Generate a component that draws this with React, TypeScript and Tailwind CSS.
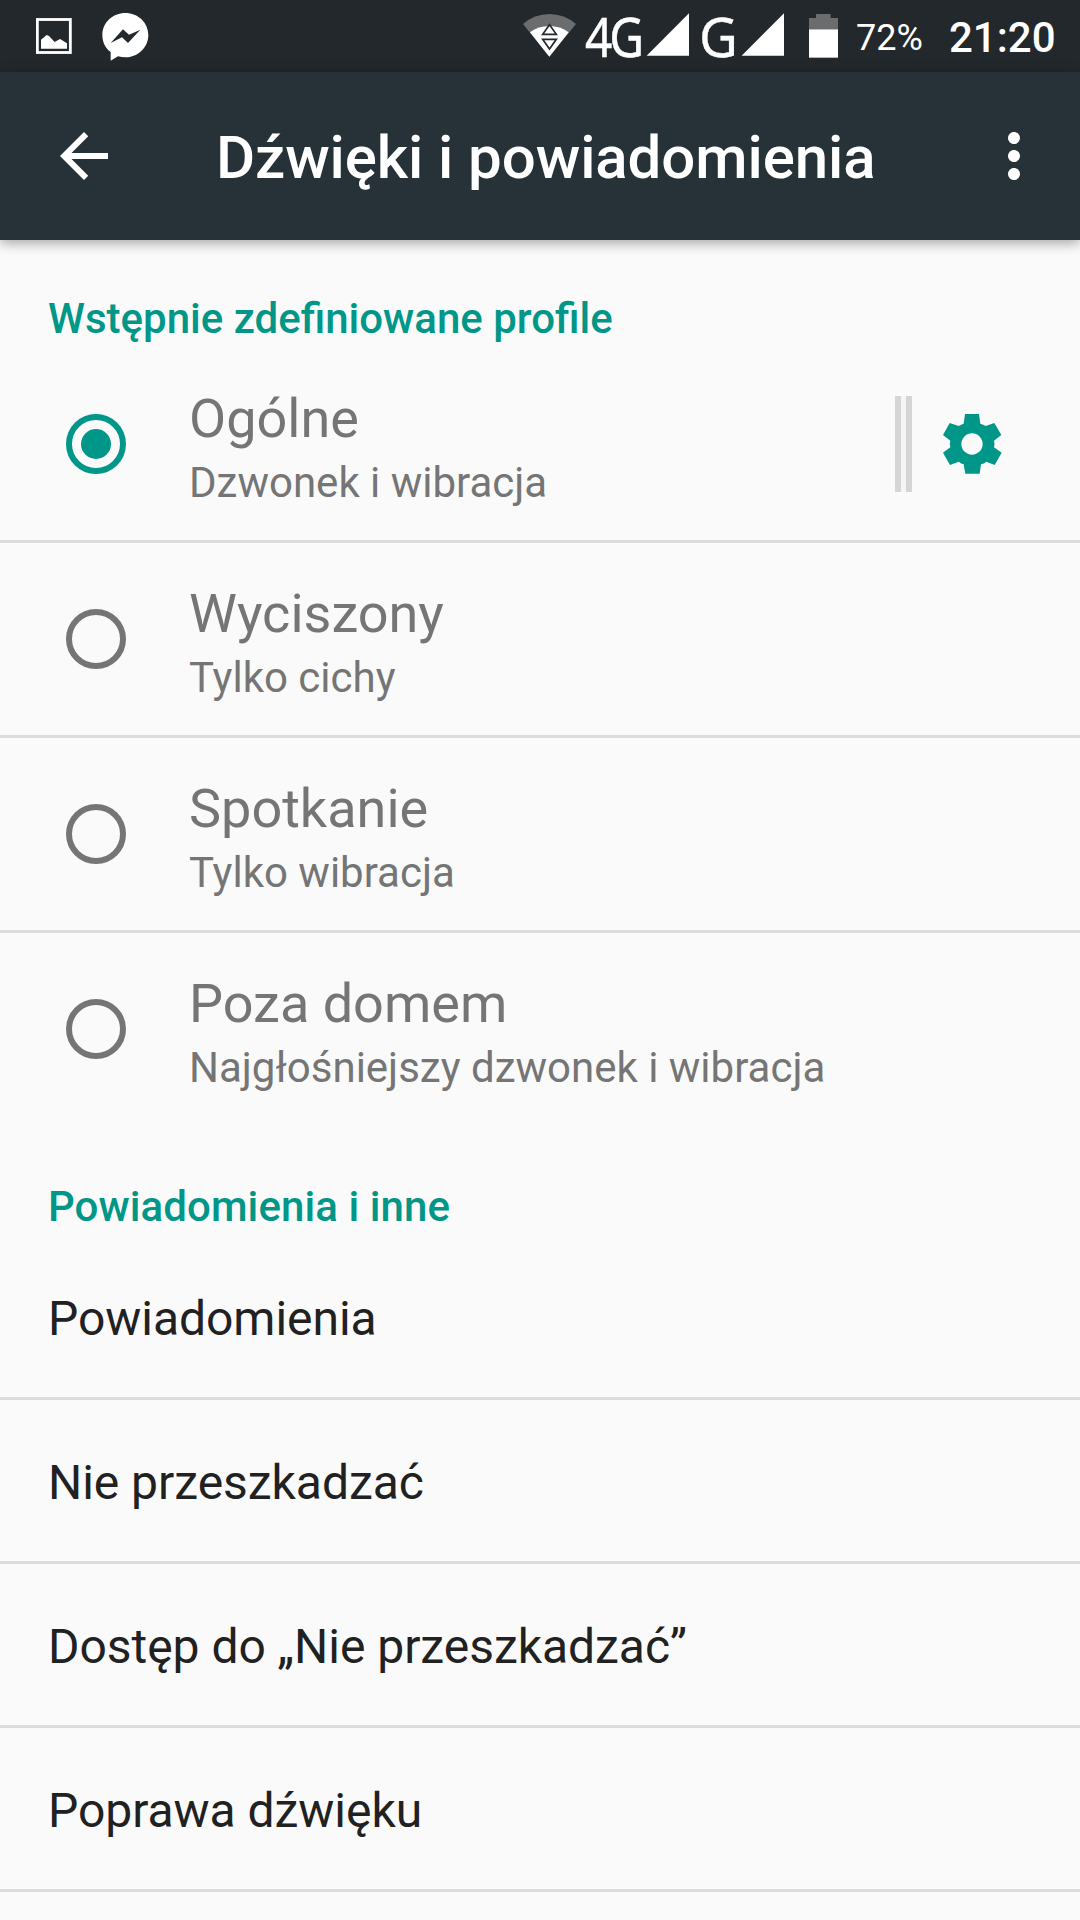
import { MdArrowBack, MdMoreVert } from "react-icons/md";

const profiles = [
  { name: "Ogólne", summary: "Dzwonek i wibracja", selected: true },
  { name: "Wyciszony", summary: "Tylko cichy", selected: false },
  { name: "Spotkanie", summary: "Tylko wibracja", selected: false },
  { name: "Poza domem", summary: "Najgłośniejszy dzwonek i wibracja", selected: false },
];

const settings = ["Powiadomienia", "Nie przeszkadzać", "Dostęp do „Nie przeszkadzać”", "Poprawa dźwięku"];

// status icons are drawn on a 3x grid, 216 units = the 72px bar
const PictureIcon = () => (
  <svg viewBox="108 0 108 216" className="h-[72px] w-9">
    <rect x="112" y="58.5" width="99" height="99" fill="none" stroke="#fff" strokeWidth="8.5" />
    <path d="M123 146V119L140 105L147 108L164 126L180 117L201 130V146Z" fill="#fff" />
  </svg>
);

const MessengerIcon = () => (
  <svg viewBox="306 0 141 216" className="ml-[30px] h-[72px] w-[47px]">
    <path
      d="M376 39C414 39 445 68 445 105S414 172 376 172C369 172 361 171 354 169L332 182V156C316 144 307 126 307 105C307 68 338 39 376 39Z"
      fill="#fff"
    />
    <path d="M332 129L369 88L387 104L421 89L384 129L366 112Z" fill="#23282c" />
  </svg>
);

const WifiIcon = () => (
  <svg viewBox="66 0 165 216" className="h-[72px] w-[55px]">
    <path d="M69 72Q103 42 148 42T228 72L148 170Z" fill="#6a6c6e" />
    <path d="M90 97Q116 78 148 78T206 97L148 170Z" fill="#fff" />
    <path d="M148.500 74L169 103H128Z" fill="#fff" stroke="#23282c" strokeWidth="5" />
    <path d="M148.500 147L169 118H128Z" fill="#fff" stroke="#23282c" strokeWidth="5" />
  </svg>
);

const SignalIcon = ({ className }: { className: string }) => (
  <svg viewBox="0 0 132 216" className={`h-[72px] w-11 ${className}`}>
    <path d="M2 167L129 40V167Z" fill="#fff" />
  </svg>
);

const BatteryIcon = () => (
  <svg viewBox="84 0 93 216" className="ml-[23px] h-[72px] w-[31px]">
    <path d="M108 42H152V54H174V88H87V54H108Z" fill="#6a6c6e" />
    <path d="M87 88H174V173H87Z" fill="#fff" />
  </svg>
);

const StatusBar = () => (
  <div className="flex h-[72px] items-center bg-[#23282c] pl-9 text-white">
    <PictureIcon />
    <MessengerIcon />
    <div className="ml-[373px] flex items-center">
      <WifiIcon />
      <div className="ml-2 w-14">
        <span className="inline-block origin-left scale-x-[0.870] font-['Noto_Sans',sans-serif] text-[55px] leading-[72px] tracking-[-3.500px] [-webkit-text-stroke:0.500px_white]">
          4G
        </span>
      </div>
      <SignalIcon className="ml-[5px]" />
      <div className="ml-[9px] w-9">
        <span className="inline-block origin-left scale-x-[0.970] font-['Noto_Sans',sans-serif] text-[55px] leading-[70px] [-webkit-text-stroke:0.300px_white]">
          G
        </span>
      </div>
      <SignalIcon className="ml-[6px]" />
      <BatteryIcon />
    </div>
    <span className="ml-[17px] w-[93px] pt-[3px] text-[36px] leading-[42px]">72%</span>
    <span className="pt-[3px] text-[42px] leading-[50px] font-medium">21:20</span>
  </div>
);

const AppBar = () => (
  <header className="relative flex h-[168px] items-center bg-[#263238] pr-[30px] pl-12 text-white shadow-[0_3px_12px_rgba(0,0,0,0.350)]">
    <MdArrowBack className="size-[72px]" />
    <h1 className="ml-24 flex-1 pt-[4px] text-[60px] leading-[70px] font-medium tracking-[-0.090px] whitespace-nowrap">
      Dźwięki i powiadomienia
    </h1>
    <MdMoreVert className="size-[72px]" />
  </header>
);

const Radio = ({ selected }: { selected: boolean }) => (
  <span
    className={
      selected
        ? "flex size-[60px] items-center justify-center rounded-full border-6 border-[#009688]"
        : "size-[60px] rounded-full border-6 border-[#757575]"
    }
  >
    {selected && <span className="size-[30px] rounded-full bg-[#009688]" />}
  </span>
);

const GearIcon = () => (
  <svg viewBox="228 114 216 216" className="size-[72px]">
    <path
      fillRule="evenodd"
      fill="#009688"
      d="M315 132H357L361 161Q370 163 377 168L403 159L424 195L402 212Q405 222 402 232L425 248L404 285L379 275Q372 281 363 283L359 311H316L311 283Q304 281 296 275L270 285L249 248L271 232Q268 222 271 212L249 195L269 159L296 168Q303 163 311 161ZM336 190A32 32 0 1 0 336 254A32 32 0 1 0 336 190Z"
    />
  </svg>
);

const App = () => {
  return (
    <div className="h-[1920px] w-[1080px] overflow-hidden bg-[#fafafa] font-[Roboto,sans-serif]">
      <StatusBar />
      <AppBar />

      <section className="h-[885px]">
        <h2 className="h-[108px] pt-[54px] pl-12 text-[42px] leading-[50px] font-medium text-[#009688] [font-variant-ligatures:common-ligatures]">
          Wstępnie zdefiniowane profile
        </h2>
        <ul className="divide-y-3 divide-[#dcdcdc] text-[#757575]">
          {profiles.map((profile) => (
            <li key={profile.name} className="box-content flex h-48 items-center pl-[66px]">
              <Radio selected={profile.selected} />
              <div className="ml-[63px] flex-1 pt-[7px]">
                <div className="text-[54px] leading-[64px]">{profile.name}</div>
                <div className="mt-[7px] text-[42px] leading-[50px]">{profile.summary}</div>
              </div>
              {profile.selected && (
                <div className="mr-[72px] flex items-center">
                  <span className="h-24 w-[17px] border-x-6 border-[#d5d5d5] bg-[#f5f5f5]" />
                  <span className="ml-6">
                    <GearIcon />
                  </span>
                </div>
              )}
            </li>
          ))}
        </ul>
      </section>

      <section>
        <h2 className="h-[111px] pt-[57px] pl-12 text-[42px] leading-[50px] font-medium tracking-[0.080px] text-[#009688]">
          Powiadomienia i inne
        </h2>
        <ul className="text-[#212121]">
          {settings.map((label) => (
            <li
              key={label}
              className="flex h-[164px] items-center border-b-3 border-[#dcdcdc] pt-[4px] pl-12 text-[48px] leading-[56px] tracking-[-0.040px]"
            >
              {label}
            </li>
          ))}
        </ul>
      </section>
    </div>
  );
};

export default App;
